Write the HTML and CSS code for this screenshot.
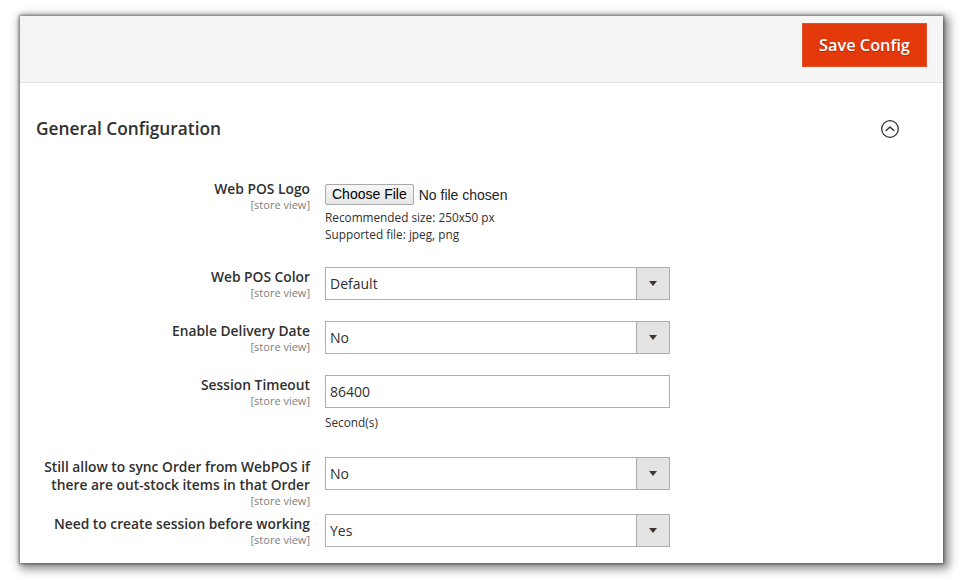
FILE: index.html
```html
<!DOCTYPE html>
<html>
<head>
<meta charset="utf-8">
<link rel="stylesheet" href="styles.css">
</head>
<body>
<div class="frame">
  <div class="header">
    <button class="save-btn">Save Config</button>
  </div>
  <div class="section">
    <div class="section-title">
      <h2>General Configuration</h2>
      <svg class="collapse" width="20" height="20" viewBox="0 0 20 20">
        <circle cx="10" cy="10" r="8.3" fill="none" stroke="#303030" stroke-width="1.3"/>
        <path d="M6.2 11.6 L10 7.9 L13.8 11.6" fill="none" stroke="#303030" stroke-width="1.4" stroke-linecap="round" stroke-linejoin="round"/>
      </svg>
    </div>
    <div class="form">
      <div class="row row-logo">
        <div class="label"><span class="name">Web POS Logo</span><span class="scope">[store view]</span></div>
        <div class="control">
          <div class="file"><button class="file-btn">Choose File</button><span class="file-text">No file chosen</span></div>
          <div class="note">Recommended size: 250x50 px<br>Supported file: jpeg, png</div>
        </div>
      </div>
      <div class="row">
        <div class="label"><span class="name">Web POS Color</span><span class="scope">[store view]</span></div>
        <div class="control">
          <div class="select"><span class="value">Default</span><span class="arrow"></span></div>
        </div>
      </div>
      <div class="row">
        <div class="label"><span class="name">Enable Delivery Date</span><span class="scope">[store view]</span></div>
        <div class="control">
          <div class="select"><span class="value">No</span><span class="arrow"></span></div>
        </div>
      </div>
      <div class="row row-timeout">
        <div class="label"><span class="name">Session Timeout</span><span class="scope">[store view]</span></div>
        <div class="control">
          <div class="input">86400</div>
          <div class="note note-sec">Second(s)</div>
        </div>
      </div>
      <div class="row row-sync">
        <div class="label"><span class="name">Still allow to sync Order from WebPOS if there are out-stock items in that Order</span><span class="scope">[store view]</span></div>
        <div class="control">
          <div class="select"><span class="value">No</span><span class="arrow"></span></div>
        </div>
      </div>
      <div class="row">
        <div class="label"><span class="name">Need to create session before working</span><span class="scope">[store view]</span></div>
        <div class="control">
          <div class="select"><span class="value">Yes</span><span class="arrow"></span></div>
        </div>
      </div>
    </div>
  </div>
</div>
</body>
</html>
```
FILE: styles.css
```css
html, body {
  margin: 0;
  padding: 0;
  background: #ffffff;
}
body {
  font-family: "Open Sans", "Liberation Sans", sans-serif;
  color: #303030;
  width: 964px;
  height: 580px;
  overflow: hidden;
}
.frame {
  margin: 16px 0 0 20px;
  width: 923px;
  height: 547px;
  background: #ffffff;
  box-shadow: 0 0 3px 1px rgba(0,0,0,0.45), 3px 3px 9px 3px rgba(0,0,0,0.45);
  overflow: hidden;
}
.header {
  background: #f5f5f5;
  border-bottom: 1px solid #e3e3e3;
  display: flex;
  justify-content: flex-end;
  align-items: flex-start;
  padding: 7px 16px 0 0;
  box-sizing: border-box;
  height: 67px;
}
.save-btn {
  width: 125px;
  height: 44px;
  background: #e3390b;
  border: 1px solid #e5522a;
  color: #ffffff;
  font-family: "Open Sans", sans-serif;
  font-weight: 600;
  font-size: 16.3px;
  text-shadow: 0 1px 1px rgba(0,0,0,0.25);
  padding: 0;
  cursor: pointer;
}
.section {
  padding: 33px 43px 0 16px;
}
.section-title {
  display: flex;
  justify-content: space-between;
  align-items: center;
  height: 24px;
}
.section-title h2 {
  margin: 0;
  font-size: 17.3px;
  font-weight: 600;
  line-height: 24px;
  color: #303030;
  padding-top: 1px;
}
.collapse {
  display: block;
  margin-top: 2px;
}
.form {
  margin-top: 39px;
}
.row {
  display: grid;
  grid-template-columns: 274px 345px;
  column-gap: 15px;
  margin-bottom: 21px;
}
.row-logo { margin-bottom: 24px; }
.row-timeout { margin-bottom: 26px; }
.row-sync { margin-bottom: 7px; }
.label {
  text-align: right;
  padding-top: 1px;
}
.name {
  display: block;
  font-size: 13.8px;
  font-weight: 600;
  line-height: 18px;
  color: #303030;
}
.scope {
  display: block;
  font-size: 11px;
  line-height: 13px;
  color: #808080;
}
.control {
  display: flex;
  flex-direction: column;
}
.file {
  display: flex;
  align-items: center;
  margin-top: 5px;
  height: 21px;
}
.file-btn {
  height: 21px;
  padding: 0 6px;
  font-family: "Liberation Sans", Arial, sans-serif;
  font-size: 14px;
  color: #000;
  background: linear-gradient(#f6f6f6, #e6e6e6);
  border: 1px solid #a9a9a9;
  border-radius: 2px;
  line-height: 19px;
}
.file-text {
  font-family: "Liberation Sans", Arial, sans-serif;
  font-size: 14px;
  margin-left: 5px;
  color: #222;
}
.note {
  font-size: 11.8px;
  line-height: 17px;
  color: #303030;
  margin-top: 4px;
}
.note-sec {
  margin-top: 6px;
}
.select, .input {
  height: 33px;
  box-sizing: border-box;
  border: 1px solid #adadad;
  background: #ffffff;
  display: flex;
  align-items: center;
  font-size: 14px;
  color: #303030;
}
.input {
  padding-left: 4px;
}
.select .value {
  flex: 1;
  padding-left: 4px;
}
.select .arrow {
  width: 32px;
  height: 31px;
  background: #e3e3e3;
  border-left: 1px solid #adadad;
  position: relative;
}
.select .arrow::after {
  content: "";
  position: absolute;
  left: 12px;
  top: 13px;
  border-left: 4px solid transparent;
  border-right: 4px solid transparent;
  border-top: 5px solid #41362f;
}
```
